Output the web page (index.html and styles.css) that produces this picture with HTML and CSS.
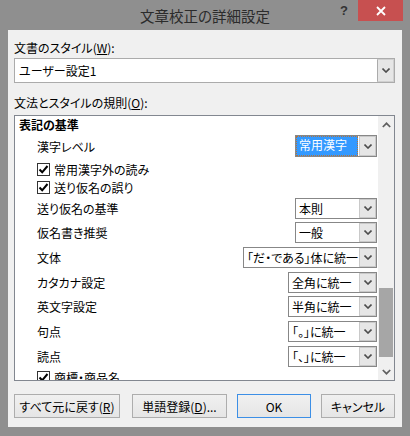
FILE: index.html
```html
<!DOCTYPE html>
<html lang="ja">
<head>
    <meta charset="UTF-8">
    <meta name="viewport" content="width=device-width, initial-scale=1.0">
    <title>文章校正の詳細設定</title>
    <link rel="stylesheet" href="styles.css">
</head>
<body>
    <div class="window">
        <div class="titlebar">
            <span class="title">文章校正の詳細設定</span>
            <span class="help">?</span>
            <span class="close">
                <svg width="10" height="10" viewBox="0 0 10 10"><path d="M1 1 L9 9 M9 1 L1 9" stroke="#fff" stroke-width="1.8" fill="none"/></svg>
            </span>
        </div>

        <div class="client">
            <div class="label">文書のスタイル(<u>W</u>):</div>
            <div class="combo combo-main">
                <span class="combo-text">ユーザー設定1</span>
                <span class="combo-btn"><svg width="8" height="5" viewBox="0 0 8 5"><path d="M0.5 0.5 L4 4 L7.5 0.5" stroke="#4d4d4d" stroke-width="1.6" fill="none"/></svg></span>
            </div>

            <div class="label label-rules">文法とスタイルの規則(<u>O</u>):</div>
            <div class="listbox">
                <div class="list-items">
                    <div class="group">表記の基準</div>

                    <div class="row row-kanji">
                        <span>漢字レベル</span>
                        <div class="combo combo-list combo-sel" style="width: 82px">
                            <span class="combo-text">常用漢字</span>
                            <span class="combo-btn"><svg width="8" height="5" viewBox="0 0 8 5"><path d="M0.5 0.5 L4 4 L7.5 0.5" stroke="#4d4d4d" stroke-width="1.6" fill="none"/></svg></span>
                        </div>
                    </div>

                    <div class="check-row first">
                        <span class="checkbox"><svg width="11" height="11" viewBox="0 0 11 11"><path d="M1.5 5.5 L4.2 8.3 L9.5 2" stroke="#000" stroke-width="2" fill="none"/></svg></span>
                        <span>常用漢字外の読み</span>
                    </div>
                    <div class="check-row">
                        <span class="checkbox"><svg width="11" height="11" viewBox="0 0 11 11"><path d="M1.5 5.5 L4.2 8.3 L9.5 2" stroke="#000" stroke-width="2" fill="none"/></svg></span>
                        <span>送り仮名の誤り</span>
                    </div>

                    <div class="row combo-row">
                        <span>送り仮名の基準</span>
                        <div class="combo combo-list" style="width: 82px">
                            <span class="combo-text">本則</span>
                            <span class="combo-btn"><svg width="8" height="5" viewBox="0 0 8 5"><path d="M0.5 0.5 L4 4 L7.5 0.5" stroke="#4d4d4d" stroke-width="1.6" fill="none"/></svg></span>
                        </div>
                    </div>
                    <div class="row combo-row">
                        <span>仮名書き推奨</span>
                        <div class="combo combo-list" style="width: 82px">
                            <span class="combo-text">一般</span>
                            <span class="combo-btn"><svg width="8" height="5" viewBox="0 0 8 5"><path d="M0.5 0.5 L4 4 L7.5 0.5" stroke="#4d4d4d" stroke-width="1.6" fill="none"/></svg></span>
                        </div>
                    </div>
                    <div class="row combo-row">
                        <span>文体</span>
                        <div class="combo combo-list" style="width: 134px">
                            <span class="combo-text">「だ・である」体に統一</span>
                            <span class="combo-btn"><svg width="8" height="5" viewBox="0 0 8 5"><path d="M0.5 0.5 L4 4 L7.5 0.5" stroke="#4d4d4d" stroke-width="1.6" fill="none"/></svg></span>
                        </div>
                    </div>
                    <div class="row combo-row">
                        <span>カタカナ設定</span>
                        <div class="combo combo-list" style="width: 89px">
                            <span class="combo-text">全角に統一</span>
                            <span class="combo-btn"><svg width="8" height="5" viewBox="0 0 8 5"><path d="M0.5 0.5 L4 4 L7.5 0.5" stroke="#4d4d4d" stroke-width="1.6" fill="none"/></svg></span>
                        </div>
                    </div>
                    <div class="row combo-row">
                        <span>英文字設定</span>
                        <div class="combo combo-list" style="width: 89px">
                            <span class="combo-text">半角に統一</span>
                            <span class="combo-btn"><svg width="8" height="5" viewBox="0 0 8 5"><path d="M0.5 0.5 L4 4 L7.5 0.5" stroke="#4d4d4d" stroke-width="1.6" fill="none"/></svg></span>
                        </div>
                    </div>
                    <div class="row combo-row">
                        <span>句点</span>
                        <div class="combo combo-list" style="width: 89px">
                            <span class="combo-text">「。」に統一</span>
                            <span class="combo-btn"><svg width="8" height="5" viewBox="0 0 8 5"><path d="M0.5 0.5 L4 4 L7.5 0.5" stroke="#4d4d4d" stroke-width="1.6" fill="none"/></svg></span>
                        </div>
                    </div>
                    <div class="row combo-row">
                        <span>読点</span>
                        <div class="combo combo-list" style="width: 89px">
                            <span class="combo-text">「、」に統一</span>
                            <span class="combo-btn"><svg width="8" height="5" viewBox="0 0 8 5"><path d="M0.5 0.5 L4 4 L7.5 0.5" stroke="#4d4d4d" stroke-width="1.6" fill="none"/></svg></span>
                        </div>
                    </div>

                    <div class="check-row">
                        <span class="checkbox"><svg width="11" height="11" viewBox="0 0 11 11"><path d="M1.5 5.5 L4.2 8.3 L9.5 2" stroke="#000" stroke-width="2" fill="none"/></svg></span>
                        <span>商標・商品名</span>
                    </div>
                </div>

                <div class="scrollbar">
                    <div class="sb-btn"><svg width="9" height="6" viewBox="0 0 9 6"><path d="M0.8 5 L4.5 1.3 L8.2 5" stroke="#606060" stroke-width="1.7" fill="none"/></svg></div>
                    <div class="sb-track"><div class="sb-thumb"></div></div>
                    <div class="sb-btn"><svg width="9" height="6" viewBox="0 0 9 6"><path d="M0.8 1 L4.5 4.7 L8.2 1" stroke="#606060" stroke-width="1.7" fill="none"/></svg></div>
                </div>
            </div>

            <div class="buttons">
                <button class="btn btn-reset">すべて元に戻す(<u>R</u>)</button>
                <button class="btn btn-words">単語登録(<u>D</u>)...</button>
                <button class="btn btn-ok">OK</button>
                <button class="btn btn-cancel">キャンセル</button>
            </div>
        </div>
    </div>
</body>
</html>
```

FILE: styles.css
```css
* {
    box-sizing: border-box;
}
body {
    margin: 0;
    background: #8f8f8f;
    font-family: "Noto Sans CJK JP", "Noto Sans", sans-serif;
    font-size: 12px;
    color: #000;
    font-feature-settings: "palt";
}
.window {
    width: 410px;
    height: 436px;
    display: flex;
    flex-direction: column;
}

/* title bar */
.titlebar {
    height: 30px;
    display: flex;
    align-items: flex-start;
}
.title {
    flex: 1;
    padding-left: 74px;
    padding-top: 6px;
    text-align: center;
    font-size: 14.5px;
    line-height: 20px;
    color: #2b2b2b;
}
.help {
    width: 16px;
    margin-right: 6px;
    padding-top: 3px;
    text-align: center;
    font-family: "Liberation Sans", sans-serif;
    font-weight: bold;
    font-size: 13px;
    line-height: 16px;
    color: #333;
}
.close {
    width: 45px;
    height: 21px;
    margin-right: 7px;
    background: #c75050;
    display: flex;
    align-items: center;
    justify-content: center;
}

/* dialog body */
.client {
    margin: 0 8px;
    height: 397px;
    background: #f0f0f0;
    padding: 10px 7px 9px 6px;
    display: flex;
    flex-direction: column;
}
.label {
    height: 16px;
    line-height: 16px;
}
.label-rules {
    margin-top: 12px;
}

.combo {
    display: flex;
    background: #fff;
}
.combo-text {
    flex: 1;
    padding-left: 3px;
    white-space: nowrap;
    overflow: hidden;
}
.combo-btn {
    width: 17px;
    display: flex;
    align-items: center;
    justify-content: center;
    background: #e6e6e6;
    border: 1px solid #c9c9c9;
}
.combo-main {
    margin-top: 2px;
    height: 25px;
    border: 1px solid #ababab;
}
.combo-main .combo-text {
    line-height: 23px;
    padding-left: 4px;
}
.combo-main .combo-btn {
    border-color: #d0d0d0;
    border-left-color: #ababab;
}
.combo-list {
    height: 21px;
    border: 1px solid #878787;
}
.combo-list .combo-text {
    line-height: 19px;
}
.combo-sel {
    height: 22px;
}
.combo-sel .combo-text {
    background: #3399ff;
    color: #fff;
    line-height: 18px;
    outline: 1px dotted #b5743a;
    outline-offset: -1px;
    margin-right: 1px;
}

/* rules list */
.listbox {
    margin-top: 4px;
    height: 266px;
    border: 1px solid #828790;
    background: #fff;
    display: flex;
    overflow: hidden;
}
.list-items {
    flex: 1;
    overflow: hidden;
}
.group {
    height: 18px;
    line-height: 18px;
    padding-left: 4px;
    font-weight: bold;
}
.row {
    display: flex;
    align-items: center;
    justify-content: space-between;
    padding-left: 22px;
    padding-right: 1px;
}
.row-kanji {
    height: 24px;
}
.combo-row {
    height: 24.67px;
}
.check-row {
    height: 18px;
    display: flex;
    align-items: center;
    gap: 4px;
    padding-left: 22px;
}
.check-row.first {
    margin-top: 2px;
}
.checkbox {
    width: 13px;
    height: 13px;
    border: 1px solid #333;
    background: #fff;
    display: flex;
    align-items: center;
    justify-content: center;
}

.scrollbar {
    width: 16px;
    background: #f0f0f0;
    display: flex;
    flex-direction: column;
}
.sb-btn {
    height: 17px;
    display: flex;
    align-items: center;
    justify-content: center;
}
.sb-track {
    flex: 1;
}
.sb-thumb {
    margin-top: 155px;
    margin-left: 1px;
    width: 14px;
    height: 69px;
    background: #a6a6a6;
}

/* buttons */
.buttons {
    margin-top: 13px;
    height: 24px;
    display: flex;
    gap: 10px;
}
.btn {
    height: 24px;
    padding: 0;
    border: 1px solid #adadad;
    background: linear-gradient(#f0f0f0, #e5e5e5);
    font-family: inherit;
    font-size: 12px;
    color: #000;
    font-feature-settings: "palt";
}
.btn-reset {
    width: 106px;
    margin-right: 2px;
}
.btn-words {
    width: 95px;
}
.btn-ok {
    width: 74px;
    border-color: #3c8fe6;
}
.btn-cancel {
    width: 74px;
}
```
